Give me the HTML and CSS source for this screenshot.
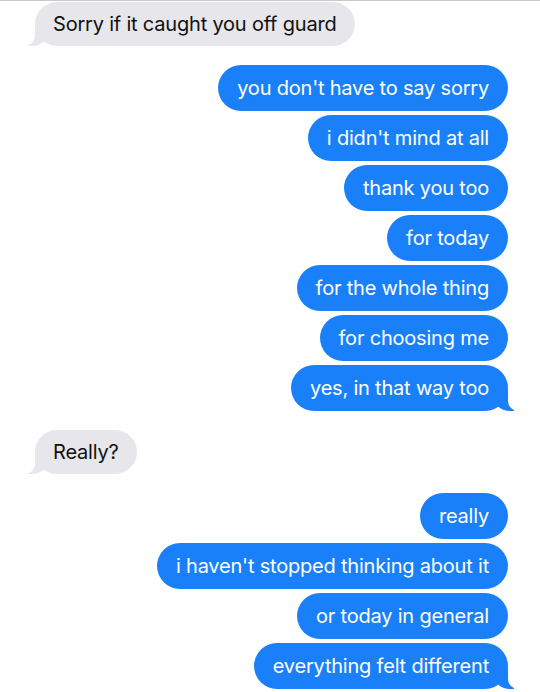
FILE: index.html
```html
<!DOCTYPE html>
<html lang="en">
<head>
  <meta charset="UTF-8" />
  <meta name="viewport" content="width=device-width, initial-scale=1.0" />
  <title>Messages</title>
  <link rel="stylesheet" href="styles.css">
</head>
<body>
  <div class="chat">
    <div class="group theirs first">
      <p class="bubble tail">Sorry if it caught you off guard</p>
    </div>
    <div class="group mine">
      <p class="bubble">you don't have to say sorry</p>
      <p class="bubble">i didn't mind at all</p>
      <p class="bubble">thank you too</p>
      <p class="bubble">for today</p>
      <p class="bubble">for the whole thing</p>
      <p class="bubble">for choosing me</p>
      <p class="bubble tail">yes, in that way too</p>
    </div>
    <div class="group theirs">
      <p class="bubble tail">Really?</p>
    </div>
    <div class="group mine">
      <p class="bubble">really</p>
      <p class="bubble">i haven't stopped thinking about it</p>
      <p class="bubble">or today in general</p>
      <p class="bubble tail">everything felt different</p>
    </div>
  </div>
</body>
</html>
```

FILE: styles.css
```css
:root {
  --blue: #1a80f9;
  --grey: #e6e6eb;
  --bg: #ffffff;
}

body {
  margin: 0;
  background: var(--bg);
  font-family: 'Inter', 'Roboto', sans-serif;
}

.chat {
  display: flex;
  flex-direction: column;
  border-top: 1px solid #c9c9c9;
  padding: 1px 32px 0 35px;
}

.group {
  display: flex;
  flex-direction: column;
  gap: 4px;
  margin-top: 19px;
}

.group.first {
  margin-top: 0;
}

.theirs {
  align-items: flex-start;
}

.mine {
  align-items: flex-end;
}

.bubble {
  position: relative;
  margin: 0;
  padding: 11px 19px;
  line-height: 24px;
  font-size: 20px;
  letter-spacing: -0.2px;
  border-radius: 23px;
  white-space: nowrap;
}

.theirs .bubble {
  background: var(--grey);
  color: #111;
  padding: 10px 18px;
}

.mine .bubble {
  background: var(--blue);
  color: #fff;
}

/* little tails on the last bubble of a group */
.bubble.tail::before,
.bubble.tail::after {
  content: "";
  position: absolute;
  bottom: 0;
  height: 20px;
}

.mine .tail::before {
  right: -6px;
  width: 20px;
  background: var(--blue);
  border-bottom-left-radius: 16px 14px;
}

.mine .tail::after {
  right: -26px;
  width: 26px;
  background: var(--bg);
  border-bottom-left-radius: 10px;
}

.theirs .tail::before {
  left: -7px;
  width: 20px;
  background: var(--grey);
  border-bottom-right-radius: 16px 14px;
}

.theirs .tail::after {
  left: -26px;
  width: 26px;
  background: var(--bg);
  border-bottom-right-radius: 10px;
}
```
